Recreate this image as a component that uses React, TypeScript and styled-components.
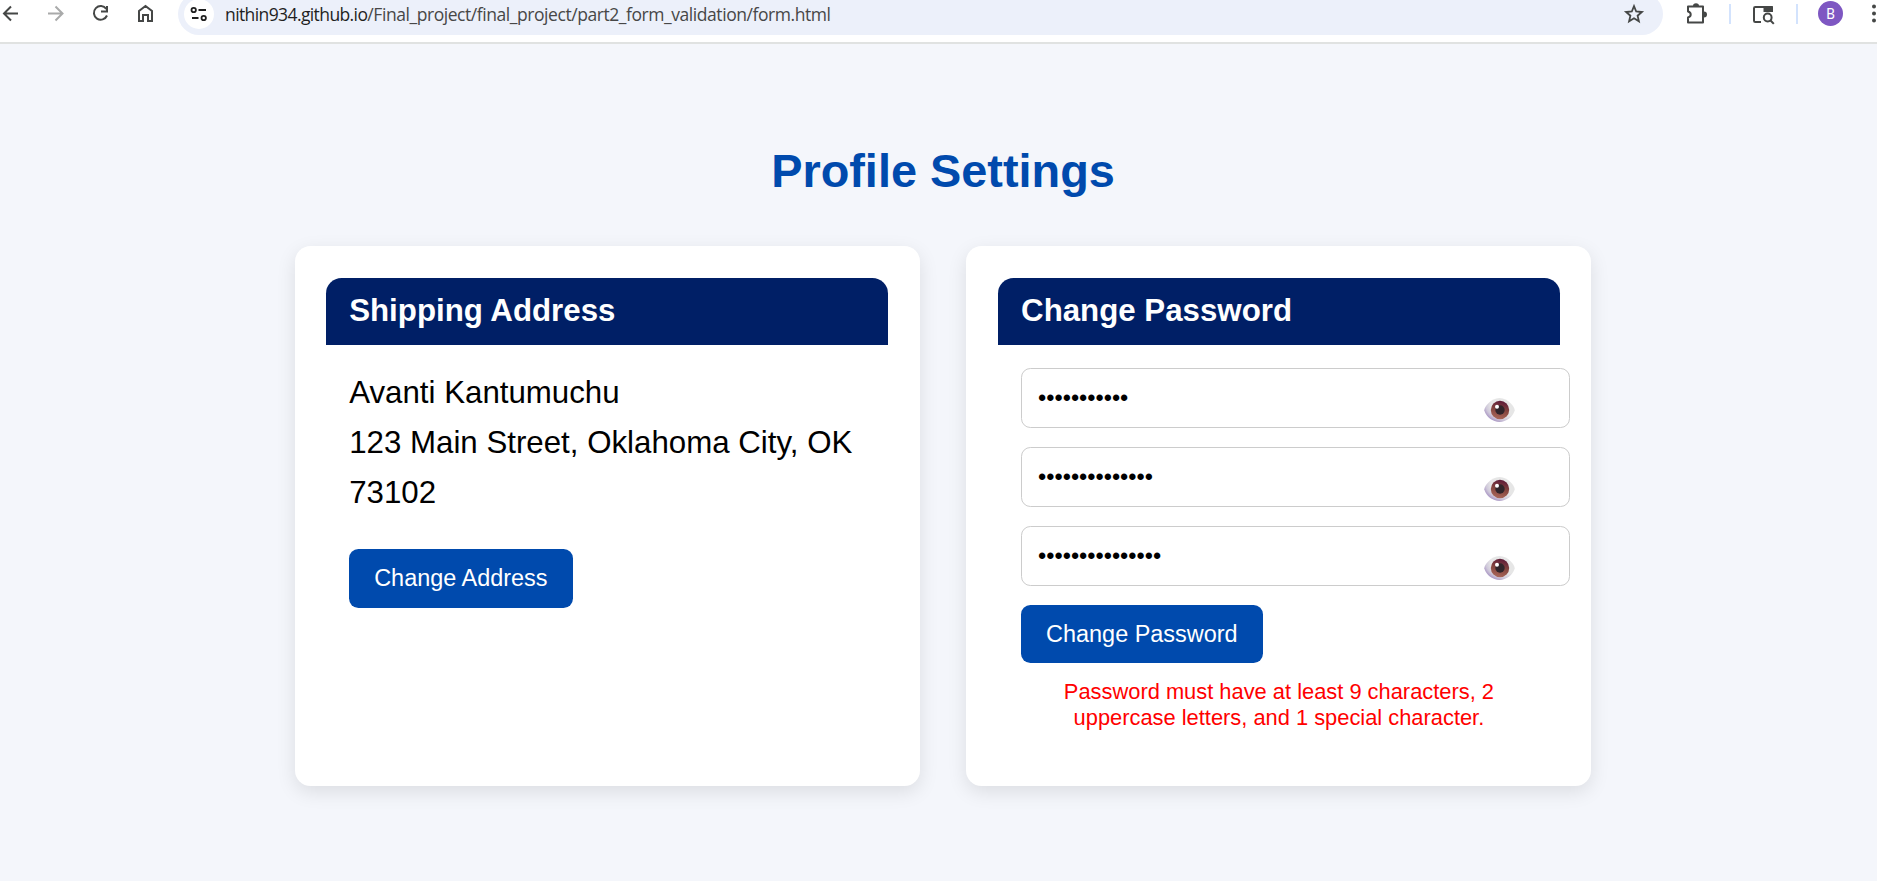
import React from "react";
import styled, { createGlobalStyle } from "styled-components";

const GlobalStyle = createGlobalStyle`
  * { box-sizing: border-box; }
  body {
    margin: 0;
    background: #f4f6fb;
    font-family: "Liberation Sans", Arial, sans-serif;
    overflow: hidden;
  }
`;

const Page = styled.div`
  display: flex;
  flex-direction: column;
  height: 881px;
  overflow: hidden;
  background: #f4f6fb;
`;

const Toolbar = styled.header`
  display: flex;
  align-items: flex-start;
  flex: none;
  height: 44px;
  overflow: hidden;
  background: #fff;
  border-bottom: 2px solid #e0e2e1;
`;

const NavIcons = styled.div`
  display: flex;
  gap: 21px;
  width: 178px;
  padding-top: 2px;
`;

const Icon = styled.svg<{ $muted?: boolean }>`
  display: block;
  flex: none;
  width: 24px;
  height: 24px;
  fill: none;
  stroke: ${(p) => (p.$muted ? "#a9aaaa" : "#454746")};
  stroke-width: 2;
`;

const AddressBar = styled.div`
  display: flex;
  align-items: center;
  width: 1485px;
  height: 42px;
  margin-top: -7px;
  padding: 0 17px 0 6px;
  border-radius: 21px;
  background: #ecf0fa;
`;

const SiteInfo = styled.span`
  display: flex;
  align-items: center;
  justify-content: center;
  width: 30px;
  height: 30px;
  border-radius: 50%;
  background: #fff;
`;

const Url = styled.span`
  flex: 1;
  margin-left: 11px;
  color: #474747;
  font-family: "Open Sans", "Noto Sans", sans-serif;
  font-size: 17.5px;
  letter-spacing: -0.44px;
  white-space: nowrap;
`;

const Host = styled.span`
  color: #1f1f1f;
  letter-spacing: -0.6px;
`;

const Actions = styled.div`
  display: flex;
  flex: none;
  padding: 2px 0 0 21px;
`;

const Divider = styled.span`
  width: 2px;
  height: 20px;
  margin: 2px 20px 0 21px;
  background: #d3e3fd;
`;

const Avatar = styled.span`
  display: flex;
  align-items: center;
  justify-content: center;
  width: 25px;
  height: 25px;
  margin: -1px 26px 0 0;
  border-radius: 50%;
  background: #7e57c2;
  color: #fff;
  font: 400 14px Roboto, sans-serif;
`;

const Main = styled.main`
  display: flex;
  flex-direction: column;
  padding: 100px 0 0 294.55px;
`;

const Title = styled.h1`
  width: 1296.9px;
  margin: 0 0 48px;
  color: #004aad;
  font-size: 46.875px;
  line-height: 54px;
  text-align: center;
`;

const Cards = styled.div`
  display: flex;
  gap: 46.875px;
`;

const Card = styled.section`
  width: 625px;
  height: 540px;
  padding: 32px 31.25px;
  border-radius: 15.6px;
  background: #fff;
  box-shadow: 0 6px 19px rgba(0, 0, 0, 0.1);
`;

const CardTitle = styled.h2`
  height: 67px;
  margin: 0;
  padding: 15px 23.4px;
  border-radius: 15.6px 15.6px 0 0;
  background: #001f66;
  color: #fff;
  font-size: 31.25px;
  line-height: 36px;
`;

const CardBody = styled.div`
  padding: 23px 23.4px 0;
`;

const Address = styled.p`
  margin: 0 0 31px;
  font-size: 31.25px;
  line-height: 50px;
`;

const Button = styled.button<{ $height: number }>`
  display: block;
  height: ${(p) => p.$height}px;
  padding: 0 25px;
  border: 0;
  border-radius: 9.4px;
  background: #004aad;
  color: #fff;
  font: 23.44px "Liberation Sans", Arial, sans-serif;
`;

const Field = styled.div`
  position: relative;
  width: 549px;
  margin-bottom: 19px;
`;

const Input = styled.input`
  display: block;
  width: 100%;
  height: 60px;
  padding: 0 16px;
  border: 1px solid #ccc;
  border-radius: 9.4px;
  outline: 0;
  background: #fff;
  color: #000;
  font: 23.44px "Liberation Sans", Arial, sans-serif;
`;

const EyeToggle = styled.span`
  position: absolute;
  top: 30px;
  right: 55px;
  line-height: 0;
`;

const Message = styled.p`
  margin: 16px 0 0;
  color: #f00;
  font-size: 21.875px;
  line-height: 26px;
  text-align: center;
`;

const Eye = () => (
  <svg width="31" height="24" viewBox="0 0 31 24">
    <defs>
      <radialGradient id="sclera" cx="0.72" cy="0.25" r="0.9">
        <stop offset="0.55" stopColor="#e6e6e6" />
        <stop offset="0.75" stopColor="#cfc8da" />
        <stop offset="1" stopColor="#8f74b4" />
      </radialGradient>
      <linearGradient id="iris" x1="0.65" y1="0" x2="0.4" y2="1">
        <stop offset="0" stopColor="#5c1837" />
        <stop offset="0.5" stopColor="#84453f" />
        <stop offset="1" stopColor="#aa6759" />
      </linearGradient>
    </defs>
    <path d="M0.300 12.500C0 9 7 0 15.500 0S31 9 30.700 12.500C29 19 22 24 15.500 24S2 19 0.300 12.500Z" fill="url(#sclera)" />
    <circle cx="16" cy="12" r="9.200" fill="url(#iris)" />
    <circle cx="16" cy="12" r="4.700" fill="#30242a" />
    <circle cx="13" cy="8.700" r="2" fill="#fff" />
  </svg>
);

const passwords = ["Oklahoma#12", "SoonerState#73", "SoonerState#731"];

export default function App() {
  return (
    <Page>
      <GlobalStyle />
      <Toolbar>
        <NavIcons>
          <Icon viewBox="0 0 24 24"><path d="M18 11.500H4M11 4.500l-7 7 7 7" /></Icon>
          <Icon viewBox="0 0 24 24" $muted><path d="M3 11.500h14M10.500 4.500l7 7-7 7" /></Icon>
          <Icon viewBox="0 0 24 24"><path d="M16.300 7A6.800 6.800 0 1 0 17 13.500M17 4v5.500h-6" /></Icon>
          <Icon viewBox="0 0 24 24"><path d="M4 19V9l6.500-5L17 9v10h-4v-6H8v6Z" /></Icon>
        </NavIcons>
        <AddressBar>
          <SiteInfo>
            <svg width="18" height="16" viewBox="0 0 18 16" fill="none" stroke="#1f1f1f" strokeWidth="1.800">
              <circle cx="3.700" cy="4" r="2.200" />
              <path d="M8.500 4h7.500M2 12h6.500" />
              <circle cx="13.700" cy="12" r="2.200" />
            </svg>
          </SiteInfo>
          <Url><Host>nithin934.github.io</Host>/Final_project/final_project/part2_form_validation/form.html</Url>
          <Icon viewBox="0 0 24 24">
            <path d="M12 4.200l2.200 5.300 5.700.5-4.300 3.700 1.300 5.600-4.900-3-4.900 3 1.300-5.600L4.100 10l5.700-.5Z" strokeWidth="1.800" />
          </Icon>
        </AddressBar>
        <Actions>
          <Icon viewBox="0 0 24 24">
            <path d="M4 4.500h15V20.500H4v-5c3.600-1 3.600-5 0-6Z" strokeLinejoin="round" />
            <path d="M9 4a3 2.800 0 0 1 6 0ZM20 9.500a3 3 0 0 1 0 6Z" fill="#454746" stroke="none" />
          </Icon>
          <Divider />
          <Icon viewBox="0 0 24 24">
            <path d="M10 20H4.300a1.300 1.300 0 0 1-1.300-1.300V6.300A1.300 1.300 0 0 1 4.300 5H20.500v5" />
            <path d="M12.500 4h8.500a1 1 0 0 1 1 1v5h-9.500Z" fill="#454746" stroke="none" />
            <circle cx="16.700" cy="15.500" r="3.900" />
            <path d="M19.300 18.300l3.500 3.600" />
          </Icon>
          <Divider />
          <Avatar>B</Avatar>
          <svg width="8" height="24" viewBox="0 0 8 24" fill="#454746">
            <circle cx="5" cy="4.500" r="2" /><circle cx="5" cy="11.500" r="2" /><circle cx="5" cy="18.500" r="2" />
          </svg>
        </Actions>
      </Toolbar>
      <Main>
        <Title>Profile Settings</Title>
        <Cards>
          <Card>
            <CardTitle>Shipping Address</CardTitle>
            <CardBody>
              <Address>Avanti Kantumuchu<br />123 Main Street, Oklahoma City, OK 73102</Address>
              <Button $height={59}>Change Address</Button>
            </CardBody>
          </Card>
          <Card>
            <CardTitle>Change Password</CardTitle>
            <CardBody>
              {passwords.map((value) => (
                <Field key={value}>
                  <Input type="password" defaultValue={value} />
                  <EyeToggle><Eye /></EyeToggle>
                </Field>
              ))}
              <Button $height={58}>Change Password</Button>
              <Message>Password must have at least 9 characters, 2 uppercase letters, and 1 special character.</Message>
            </CardBody>
          </Card>
        </Cards>
      </Main>
    </Page>
  );
}
